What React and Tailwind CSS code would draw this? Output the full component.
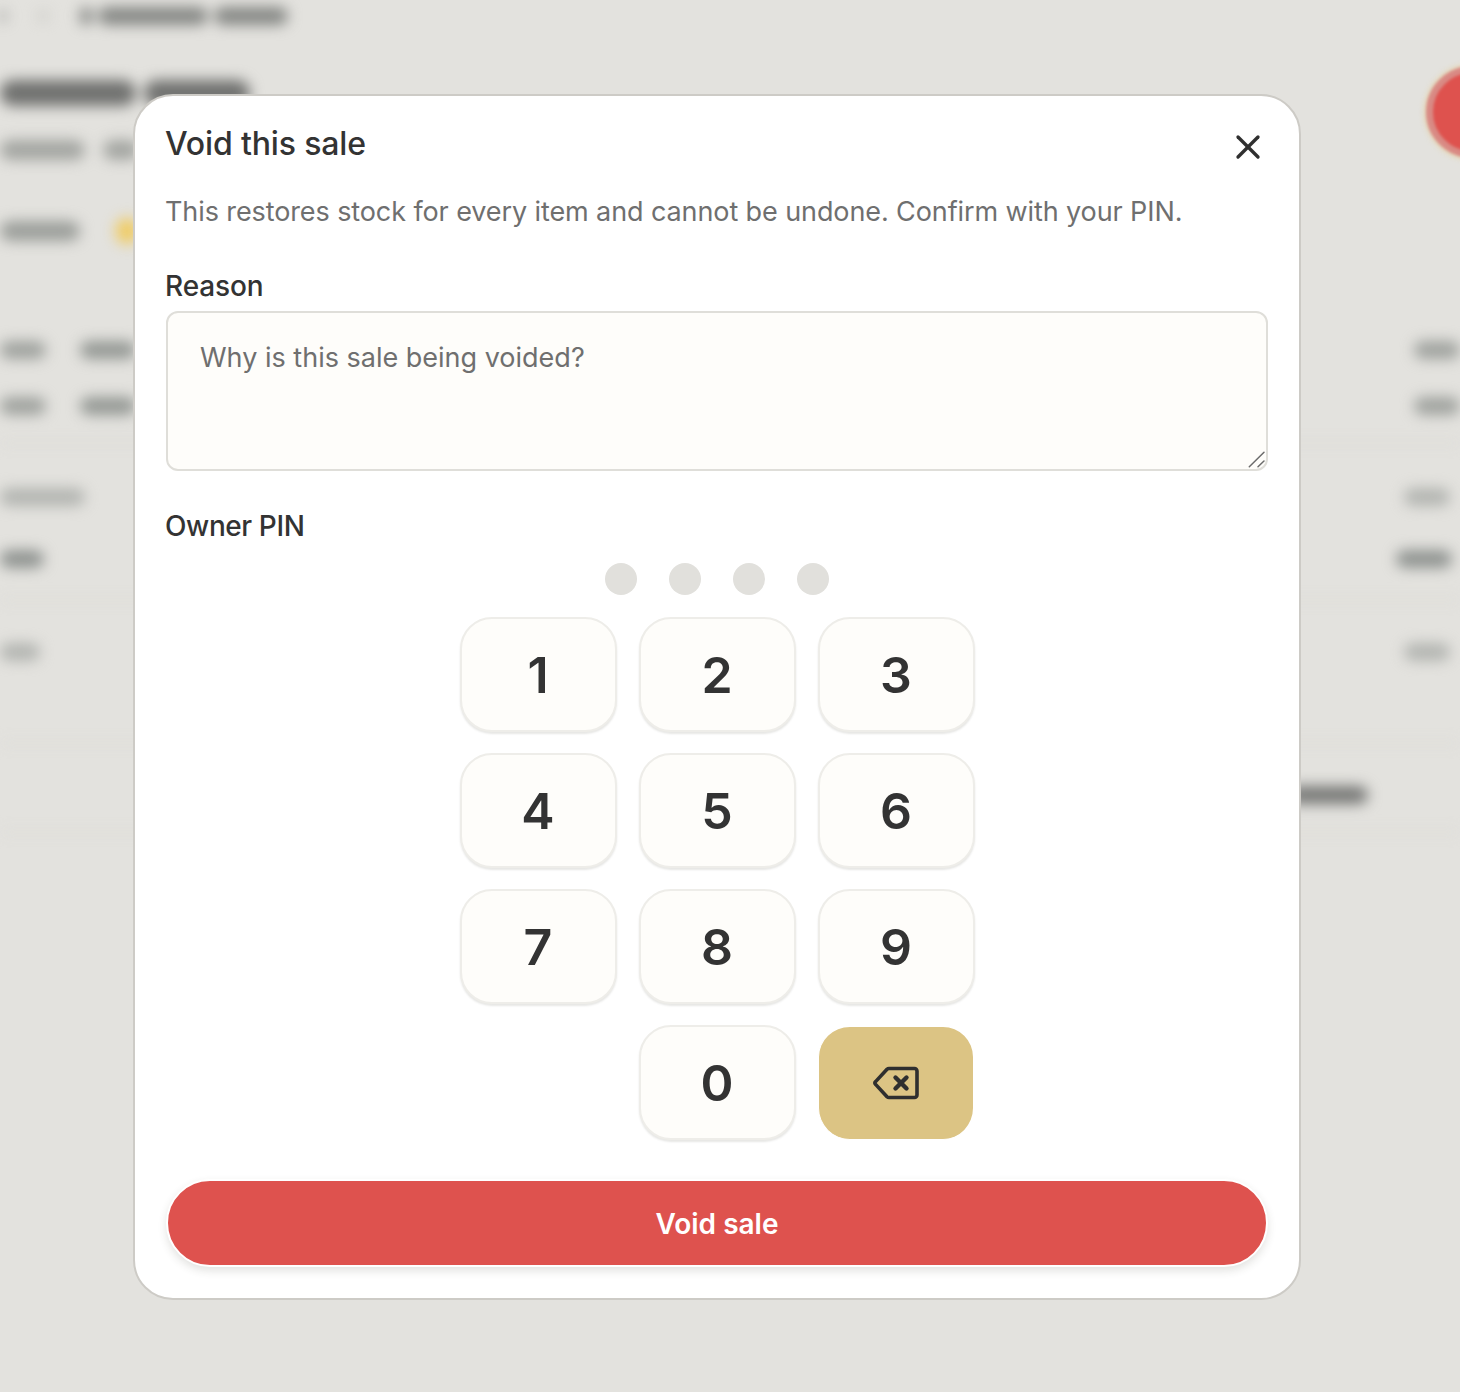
import { X } from 'lucide-react'

const KEYS = ['1', '2', '3', '4', '5', '6', '7', '8', '9']

function Bar({ w, tone = 'bg-[#a9aaa7]', h = 'h-[18px]' }) {
  return <div className={`${w} ${h} ${tone} rounded-full`} />
}

function Row({ className = '', left, right }) {
  return (
    <div className={`flex items-center justify-between ${className}`}>
      <div className="flex items-center gap-[34px]">{left}</div>
      <div className="flex items-center">{right}</div>
    </div>
  )
}

function Backdrop() {
  return (
    <div className="flex flex-col blur-[7px]">
      <div className="flex items-center h-[16px] mt-[8px] gap-[32px]">
        <div className="w-[6px] h-[12px] bg-[#a0a19e] rounded-full" />
        <div className="w-[10px] h-[10px] bg-[#c8c8c4] rounded-full" />
        <div className="flex gap-[6px]">
          <div className="w-[12px] h-[18px] bg-[#858784] rounded-full" />
          <div className="w-[110px] h-[18px] bg-[#858784] rounded-full" />
          <div className="w-[74px] h-[18px] bg-[#858784] rounded-full" />
        </div>
      </div>
      <div className="flex gap-[8px] mt-[56px]">
        <div className="w-[136px] h-[26px] bg-[#70716f] rounded-full" />
        <div className="w-[106px] h-[26px] bg-[#70716f] rounded-full" />
      </div>
      <div className="flex items-center gap-[18px] mt-[34px]">
        <div className="w-[85px] h-[20px] bg-[#a3a5a1] rounded-full" />
        <div className="w-[36px] h-[20px] bg-[#a3a5a1] rounded-full" />
      </div>
      <div className="flex items-center gap-[36px] mt-[58px]">
        <div className="w-[80px] h-[20px] bg-[#9b9e9a] rounded-full" />
        <div className="w-[22px] h-[26px] bg-[#f0cb60] rounded-full" />
      </div>
      <Row className="mt-[96px] h-[20px]"
        left={<><Bar w="w-[46px]" tone="bg-[#9fa29e]" /><Bar w="w-[56px]" tone="bg-[#949894]" /></>}
        right={<Bar w="w-[46px]" tone="bg-[#9fa29e]" />} />
      <Row className="mt-[36px] h-[20px]"
        left={<><Bar w="w-[46px]" tone="bg-[#9fa29e]" /><Bar w="w-[56px]" tone="bg-[#949894]" /></>}
        right={<Bar w="w-[46px]" tone="bg-[#9fa29e]" />} />
      <div className="h-[2px] mt-[26px] bg-[#d6d5d1]" />
      <Row className="mt-[43px] h-[20px] pr-[10px]"
        left={<Bar w="w-[85px]" tone="bg-[#b3b5b1]" />}
        right={<Bar w="w-[46px]" tone="bg-[#b3b5b1]" />} />
      <Row className="mt-[42px] h-[20px] pr-[8px]"
        left={<Bar w="w-[44px]" tone="bg-[#8f9390]" />}
        right={<Bar w="w-[56px]" tone="bg-[#8f9390]" />} />
      <div className="h-[2px] mt-[30px] bg-[#d8d7d3]" />
      <Row className="mt-[41px] h-[20px] pr-[10px]"
        left={<Bar w="w-[40px]" tone="bg-[#b3b5b1]" />}
        right={<Bar w="w-[46px]" tone="bg-[#b3b5b1]" />} />
      <div className="h-[2px] mt-[80px] bg-[#d8d7d3]" />
      <div className="flex justify-end pr-[92px] mt-[41px] h-[20px] items-center">
        <Bar w="w-[80px]" tone="bg-[#767775]" />
      </div>
      <div className="h-[2px] mt-[26px] bg-[#d8d7d3]" />
    </div>
  )
}

function BackspaceIcon() {
  return (
    <svg width="46" height="34" viewBox="0 0 46 34" fill="none" stroke="#2f2f2f" strokeWidth="3.6" strokeLinecap="round" strokeLinejoin="round">
      <path d="M16 2.5h25.5a2.5 2.5 0 0 1 2.5 2.5v24a2.5 2.5 0 0 1-2.5 2.5H16a3 3 0 0 1-2-.8L2.6 18.4a2 2 0 0 1 0-2.8L14 3.3a3 3 0 0 1 2-.8z" />
      <path d="M22.5 11.5l11 11" strokeWidth="4.4" />
      <path d="M33.5 11.5l-11 11" strokeWidth="4.4" />
    </svg>
  )
}

function Key({ children }) {
  return (
    <button className="w-[157px] h-[115px] pt-[2px] rounded-[32px] border-2 border-[#eeede9] bg-[#fefdfa] shadow-[0_2px_2px_rgba(60,55,40,0.12)] text-[50px] font-semibold text-[#333] flex items-center justify-center">
      {children}
    </button>
  )
}

export default function App() {
  return (
    <div className="relative h-[1392px] overflow-hidden bg-[#e3e2de] font-['Inter',sans-serif]">
      <Backdrop />
      <div className="absolute right-[-58px] top-[66px] w-[92px] h-[92px] rounded-full border-[7px] border-[#d98a84] bg-[#de524e] blur-[1.5px] shadow-[0_0_6px_#e6c98a]" />

      <div className="absolute inset-0 pl-[133px] pt-[94px]">
        <div className="w-[1168px] h-[1206px] rounded-[40px] border-2 border-[#cdcbc6] bg-white px-[31px] pt-[27px] text-[#333]">
          <div className="flex items-start justify-between">
            <h2 className="ml-[-1px] text-[32px] leading-[42px] font-medium tracking-[-0.15px]">Void this sale</h2>
            <button className="mt-[4px] text-[#2f2f2f]"><X size={40} strokeWidth={2} /></button>
          </div>
          <p className="ml-[-1px] mt-[23px] text-[27px] leading-[44px] tracking-[-0.1px] text-[#6f6f6f]">This restores stock for every item and cannot be undone. Confirm with your PIN.</p>

          <label className="block ml-[-1px] mt-[34px] text-[28px] leading-[36px] font-medium tracking-[-0.1px]">Reason</label>
          <div className="relative mt-[7px]">
            <textarea
              placeholder="Why is this sale being voided?"
              className="block w-full h-[160px] resize-none rounded-[12px] border-2 border-[#dfded9] bg-[#fefdfa] px-[32px] py-[24px] text-[27px] leading-[42px] outline-none placeholder:text-[#6f6f6f]"
            />
            <svg className="absolute right-[2px] bottom-[2px]" width="20" height="20" viewBox="0 0 20 20" fill="none" stroke="#6b6b6b" strokeWidth="1.5" strokeLinecap="round">
              <path d="M3.3 17.7L18 3.3" />
              <path d="M12 17.7L18 12" />
            </svg>
          </div>

          <label className="block ml-[-1px] mt-[37px] text-[28px] leading-[36px] font-medium tracking-[-0.4px]">Owner PIN</label>

          <div className="mt-[19px] flex justify-center gap-[32px]">
            <span className="w-[32px] h-[32px] rounded-full bg-[#e1e0dc]" />
            <span className="w-[32px] h-[32px] rounded-full bg-[#e1e0dc]" />
            <span className="w-[32px] h-[32px] rounded-full bg-[#e1e0dc]" />
            <span className="w-[32px] h-[32px] rounded-full bg-[#e1e0dc]" />
          </div>

          <div className="mt-[22px] mx-auto grid w-[515px] grid-cols-[157px_157px_157px] gap-x-[22px] gap-y-[21px]">
            {KEYS.map(k => <Key key={k}>{k}</Key>)}
            <div />
            <Key>0</Key>
            <button className="w-[157px] h-[115px] rounded-[32px] border-t-2 border-r-2 border-b border-l border-white bg-[#dcc484] flex items-center justify-center">
              <BackspaceIcon />
            </button>
          </div>

          <button className="block mt-[39px] w-full h-[88px] pt-[2px] rounded-full border-2 border-white bg-[#de524e] text-white text-[28px] font-semibold shadow-[0_4px_8px_rgba(60,55,40,0.14)]">
            Void sale
          </button>
        </div>
      </div>
    </div>
  )
}
